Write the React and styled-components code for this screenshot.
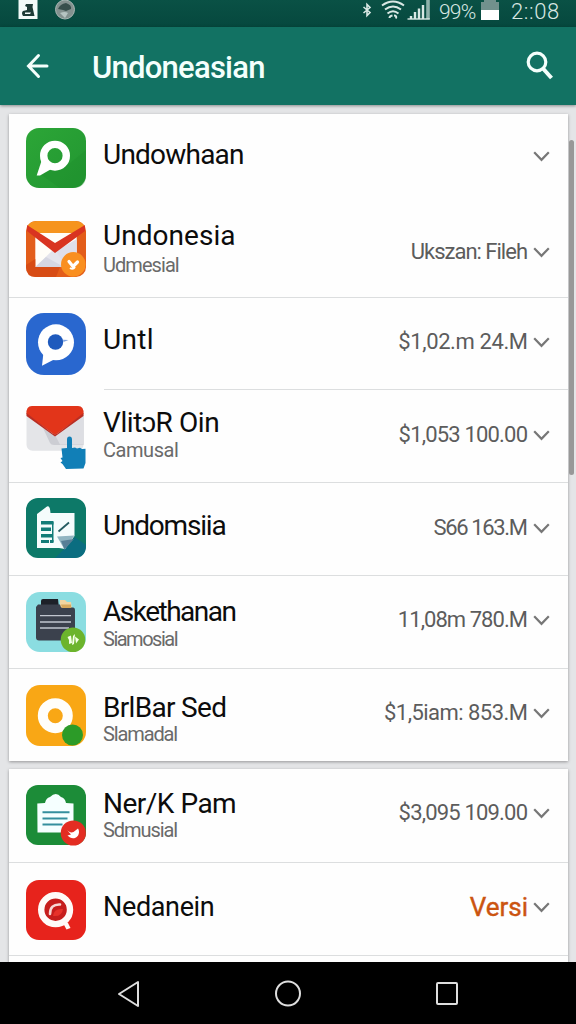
import React from 'react';
import styled, { createGlobalStyle } from 'styled-components';

const GlobalStyle = createGlobalStyle`
    * {
        box-sizing: border-box;
    }
    body {
        margin: 0;
        background: #e4e5e7;
        font-family: Roboto, "Liberation Sans", sans-serif;
    }
`;

const Screen = styled.div`
    position: relative;
    display: flex;
    flex-direction: column;
    width: 576px;
    height: 1024px;
    overflow: hidden;
`;

const StatusBar = styled.div`
    display: flex;
    flex: none;
    justify-content: space-between;
    height: 27px;
    padding: 0 15px 0 18px;
    background: linear-gradient(#0a5145, #06483e);
    color: #d9e8e4;
`;

const StatusGroup = styled.div`
    display: flex;
    align-items: flex-start;
`;

const StatusText = styled.span`
    width: ${props => props.$width}px;
    margin-left: ${props => props.$left}px;
    font-size: ${props => props.$size}px;
    line-height: 24px;
    letter-spacing: ${props => props.$spacing}px;
    font-weight: 300;
    white-space: nowrap;
`;

const AppBar = styled.header`
    display: flex;
    flex: none;
    align-items: center;
    height: 78px;
    padding: 0 22px 0 26px;
    background: #127263;
    color: #f4fffc;
    box-shadow: 0 1px 3px rgba(0, 0, 0, 0.4);
    z-index: 1;
`;

const AppTitle = styled.h1`
    flex: 1;
    margin: 4px 0 0 42px;
    font-size: 31px;
    line-height: 36px;
    font-weight: 500;
    letter-spacing: -0.75px;
`;

const Content = styled.main`
    flex: 1;
    min-height: 0;
    overflow: hidden;
    padding: 9px 8px 0 9px;
`;

const Card = styled.section`
    margin-bottom: 8px;
    background: #fefefe;
    box-shadow: 0 1px 3px rgba(0, 0, 0, 0.35);
`;

const Row = styled.div`
    display: flex;
    align-items: flex-start;
    height: ${props => props.$height}px;
    padding: 0 18px 0 17px;
`;

const Divider = styled.div`
    height: 1px;
    margin-top: -1px;
    margin-left: ${props => props.$inset || 0}px;
    background: #dcdedf;
`;

const IconBox = styled.div`
    flex: none;
    width: 60px;
    margin-top: ${props => props.$top}px;

    svg {
        display: block;
        overflow: visible;
    }
`;

const Names = styled.div`
    flex: 1;
    min-width: 0;
    margin-left: 17px;
    padding-top: ${props => props.$top}px;
    white-space: nowrap;
`;

const Name = styled.div`
    padding-top: 1px;
    font-size: ${props => props.$size || 28}px;
    line-height: 32px;
    letter-spacing: ${props => props.$spacing}px;
    color: #0c0c0c;
`;

const Detail = styled.div`
    margin-top: ${props => (props.$gap || 0) - 1}px;
    font-size: 20px;
    line-height: 24px;
    letter-spacing: ${props => props.$spacing}px;
    color: #6a6a6a;
`;

const Trailing = styled.div`
    display: flex;
    flex: none;
    align-items: center;
    gap: 5px;
    height: 26px;
    margin-top: ${props => props.$top}px;
    color: #777;
`;

const Amount = styled.span`
    font-size: ${props => (props.$accent ? 26 : 22)}px;
    line-height: 26px;
    letter-spacing: ${props => props.$spacing}px;
    margin-right: ${props => -props.$spacing}px;
    color: ${props => (props.$accent ? '#cb5410' : '#5c5c5c')};
    -webkit-text-stroke: ${props => (props.$accent ? '0.4px #cb5410' : '0')};
`;

const NavBar = styled.nav`
    display: flex;
    flex: none;
    justify-content: space-between;
    align-items: center;
    height: 62px;
    padding: 2px 117px 0;
    background: #000;
`;

const ScrollThumb = styled.div`
    position: absolute;
    top: 140px;
    right: 2px;
    width: 5px;
    height: 335px;
    border-radius: 3px;
    background: #989898;
`;

const Chevron = () => (
    <svg width="17" height="11" viewBox="0 0 17 11" fill="none" stroke="currentColor" strokeWidth="2.2">
        <path d="M1.2 1.2 8.5 8.8 15.8 1.2" />
    </svg>
);

const PhoneGreen = () => (
    <svg width="60" height="60">
        <defs>
            <linearGradient id="green" x1="0" y1="0" x2="1" y2="1">
                <stop offset="0" stopColor="#2ca637" />
                <stop offset="1" stopColor="#229631" />
            </linearGradient>
        </defs>
        <rect width="60" height="60" rx="13" fill="url(#green)" />
        <path d="M43 36 60 22v25q0 13-13 13H34L14 46Z" fill="#1c8b2c" opacity="0.35" />
        <path d="M15.500 33 10.700 47.500 14 47.500 27 40Z" fill="#fff" />
        <circle cx="29" cy="27.7" r="11.3" fill="none" stroke="#fff" strokeWidth="7.4" />
    </svg>
);

const MailOrange = () => (
    <svg width="60" height="56">
        <rect width="60" height="56" rx="10" fill="#e35d1a" />
        <path d="M1 7Q3 0 11 0h38q8 0 10 7L46 17H14Z" fill="#f6941d" />
        <path d="M9.3 12h41.4v34H9.3Z" fill="#fffdf8" />
        <path d="M9.3 46 28 28h4l18.7 18Z" fill="#e4e4ec" />
        <path d="M20 36 38 46H9.3Z" fill="#d5d6e2" />
        <path d="M50.7 18v28H40L30 30Z" fill="#dfdfea" />
        <path d="M1 4 29 22 59 4v6L29 32 1 10Z" fill="#d93421" />
        <path d="M0 44 9.3 38v8H34l-4 10H10Q0 56 0 46Z" fill="#d74c15" />
        <circle cx="47.3" cy="43.4" r="12.3" fill="#f98f20" />
        <path d="M43 40.500 47 45.500 51.500 41" fill="none" stroke="#fff" strokeWidth="3.200" strokeLinecap="round" strokeLinejoin="round" />
        <path d="M44 47q3 2 5-1" fill="none" stroke="#fff" strokeWidth="2" />
    </svg>
);

const ChatBlue = () => (
    <svg width="60" height="62">
        <rect width="60" height="62" rx="18" fill="#2967cf" />
        <path d="M17.500 39 16 52.800 31 45Z" fill="#fff" />
        <circle cx="30" cy="29.300" r="18" fill="#fff" />
        <circle cx="29.500" cy="29" r="7.700" fill="#1f5abd" />
        <path d="M37 26.800 42.500 27 37.500 29Z" fill="#7fa3df" />
    </svg>
);

const MailHand = () => (
    <svg width="60" height="63">
        <rect x="0.5" width="57" height="44.700" rx="6" fill="#e4e5e8" />
        <path d="M17 22 24 37q1 2 4 2h29.500V9L29 29Z" fill="#cccdd3" />
        <path d="M29 29 57.500 9v29.500H34Z" fill="#dddee3" />
        <path d="M.5 8Q0 0 6 0h46q6 0 5.500 8L32 27q-3 2.500-6 0Z" fill="#e2351a" />
        <path d="M.5 7 26 27q3 2.500 6 0L57.500 7v3L29 30.500.5 10Z" fill="#b92d22" />
        <path d="M41 33.500Q41 30.500 43.500 30.500T46 33.500V42L49 41.500 51 42.500 54 41.800 56 43 59.500 42.800V57L57.500 62.500 40 63 36.500 58 34.500 56.500 36.500 55 34.500 52 36.500 51.500 35.500 42.500 41 42Z" fill="#117fb7" />
    </svg>
);

const DocTeal = () => (
    <svg width="60" height="60">
        <rect width="60" height="60" rx="12" fill="#0d7968" />
        <path d="M38 51 48.500 39 60 47Q60 60 48 60H29Z" fill="#0b6d80" />
        <path d="M11 16 21 8.500q3-1.500 3.500 6.500H48.500V38L39 51 33 50H11Z" fill="#f5fcfc" />
        <g fill="#127c78">
            <path d="M15 23h12.500v3.500H15zM15 29.500h10v3.500H15zM15 36h12v3.500H15zM15 42h8v3h-8zM24 42h3.500v3H24z" />
            <path d="M26 24h1.500v20H26z" />
        </g>
        <path d="M32.500 33.500 43 24.500" stroke="#245c61" strokeWidth="1.800" />
        <path d="M31 38.500 48.500 37.500 38.500 51.500Z" fill="#91b5c1" />
        <path d="M35 43 48 41 38.500 51.500Z" fill="#587f96" />
    </svg>
);

const FolderCyan = () => (
    <svg width="60" height="60">
        <rect width="60" height="60" rx="14" fill="#8bdde1" />
        <path d="M15 16V9q0-2 2-2h15l1 9Z" fill="#1d2128" />
        <path d="M34 8h5l2 2h4l1 7H34Z" fill="#f1d5a1" />
        <path d="M12 12.500h22l1 3h12q2 0 2 3v27q0 3-3 3H13q-3 0-3-3V15Z" fill="#3b414d" />
        <path d="M35 12.500h10v3.500H36Z" fill="#d7a85c" />
        <path d="M14 23.700h31M14 30h31M14 36h29" stroke="#c1c6cf" strokeWidth="1.300" />
        <circle cx="47" cy="47.700" r="12.300" fill="#6cb42c" />
        <path d="M41.500 45 45 43.500 46 51 43 52 43 48ZM47 44l2-2-1 10-2 1ZM49 44.500l4 3-3 4Z" fill="#f5ffe8" />
    </svg>
);

const RingAmber = () => (
    <svg width="60" height="61">
        <rect width="60" height="61" rx="14" fill="#f9a715" />
        <circle cx="29.300" cy="30.700" r="12.500" fill="none" stroke="#fffefa" strokeWidth="10" />
        <circle cx="46.500" cy="50" r="10.500" fill="#2c9b28" />
    </svg>
);

const ClipGreen = () => (
    <svg width="60" height="60">
        <rect width="60" height="60" rx="12" fill="#1c8c38" />
        <path d="M11.300 18.500 19 18q1-5 5-6 6-6 11 0 4 1 5 6l7.500.5v29h-36Z" fill="#f5ffff" />
        <path d="M16.500 27.300h27M16.500 33.500h25M16.500 39.500h20" stroke="#348f9e" strokeWidth="2" />
        <circle cx="47.300" cy="48" r="12.600" fill="#e32d22" />
        <path d="M41 45c2 2 4 3 6.500 2L52 43.500c2 3 1 8-3 9.500-3 1-5.500-.5-7.500-2.500l3.500-1Z" fill="#fff" />
    </svg>
);

const SearchRed = () => (
    <svg width="60" height="60">
        <rect width="60" height="60" rx="13" fill="#e7231c" />
        <circle cx="29.600" cy="29.700" r="14.400" fill="#c61d1c" stroke="#fffaf8" strokeWidth="6.400" />
        <path d="M37 43h5l2.500 5-4 1.500Z" fill="#fffaf8" />
        <path d="M24 34q0-10 10-9.500" fill="none" stroke="#f7d8d5" strokeWidth="2.600" strokeLinecap="round" />
        <path d="M27 36q1-8 10-7-1 8-10 7Z" fill="#e7312a" />
    </svg>
);

const wallet = [
    { icon: PhoneGreen, height: 91, iconTop: 14, name: 'Undowhaan', nameTop: 24, nameSpacing: -0.78, valueTop: 29 },
    { icon: MailOrange, height: 93, iconTop: 16, name: 'Undonesia', nameTop: 14, nameSpacing: 0.05, detail: 'Udmesial', detailSpacing: -0.95, detailGap: 2, value: 'Ukszan: Fileh', valueTop: 34, valueSpacing: -1, divider: true },
    { icon: ChatBlue, height: 92, iconTop: 15, name: 'Untl', nameTop: 25, nameSpacing: 0.3, value: '$1,02.m 24.M', valueTop: 31, valueSpacing: -0.4, divider: true, inset: 95 },
    { icon: MailHand, height: 93, iconTop: 16, name: 'VlitɔR Oin', nameTop: 16, nameSpacing: -0.4, detail: 'Camusal', detailSpacing: -0.45, value: '$1,053 100.00', valueTop: 32, valueSpacing: -0.82, divider: true },
    { icon: DocTeal, height: 93, iconTop: 15, name: 'Undomsiia', nameTop: 26, nameSpacing: -1.2, value: 'S66 163.M', valueTop: 32, valueSpacing: -1.36, divider: true },
    { icon: FolderCyan, height: 93, iconTop: 16, name: 'Askethanan', nameTop: 19, nameSpacing: -1.5, detail: 'Siamosial', detailSpacing: -1.5, value: '11,08m 780.M', valueTop: 31, valueSpacing: -0.95, divider: true },
    { icon: RingAmber, height: 92, iconTop: 16, name: 'BrlBar Sed', nameTop: 22, nameSpacing: -0.68, detail: 'Slamadal', detailSpacing: -1.13, detailGap: -1, value: '$1,5iam: 853.M', valueTop: 31, valueSpacing: -0.53 },
];

const others = [
    { icon: ClipGreen, height: 94, iconTop: 16, name: 'Ner/K Pam', nameTop: 18, nameSpacing: -0.5, detail: 'Sdmusial', detailSpacing: -1.07, detailGap: -1, value: '$3,095 109.00', valueTop: 31, valueSpacing: -0.82, divider: true },
    { icon: SearchRed, height: 93, iconTop: 17, name: 'Nedanein', nameTop: 27, nameSize: 27, nameSpacing: -0.35, value: 'Versi', valueTop: 31, valueSpacing: 0, accent: true, divider: true },
    { height: 60 },
];

const AppRow = ({ item }) => {
    const Icon = item.icon;
    if (!Icon) return <Row $height={item.height} />;
    return (
        <>
            <Row $height={item.height}>
                <IconBox $top={item.iconTop}><Icon /></IconBox>
                <Names $top={item.nameTop}>
                    <Name $size={item.nameSize} $spacing={item.nameSpacing}>{item.name}</Name>
                    {item.detail && <Detail $gap={item.detailGap} $spacing={item.detailSpacing}>{item.detail}</Detail>}
                </Names>
                <Trailing $top={item.valueTop}>
                    {item.value && <Amount $accent={item.accent} $spacing={item.valueSpacing}>{item.value}</Amount>}
                    <Chevron />
                </Trailing>
            </Row>
            {item.divider && <Divider $inset={item.inset} />}
        </>
    );
};

const StatusIcons = () => (
    <svg width="70" height="27" fill="none" stroke="#d9e8e4">
        <path d="M1.500 7 8 12.500 5 15.500V4.500L8 7.500 1.500 13" strokeWidth="1.600" />
        <path d="M20 5.500q11-8 22 0M23 9.500q8-6 16 0M25.500 13.500q5.500-4.500 11 0" strokeWidth="2" />
        <path d="M27.500 18q0-2 3-2.500M32 15.500q3 0 2 3" strokeWidth="2" />
        <path d="M49 19v-3M53 19v-7M57 19V8.500M61 19V5" strokeWidth="2.400" />
        <path d="M66 19V0" stroke="#8fb2ab" strokeWidth="3.600" />
        <path d="M45.500 19h22.300" strokeWidth="1.400" />
    </svg>
);

const App = () => {
    return (
        <>
            <GlobalStyle />
            <Screen>
                <StatusBar>
                    <StatusGroup>
                        <svg width="60" height="27">
                            <rect x="0.500" width="19" height="19" fill="#f2fbf9" />
                            <path d="M8 4h7l-.5 3 2 9H5q-2-3 0-5l4-1V7L7 6Z" fill="#1d3c37" />
                            <path d="M7 12.500h6l-1 1.500H7z" fill="#f2fbf9" />
                            <circle cx="47" cy="9.500" r="9.500" fill="#83918f" stroke="#a9b7b4" />
                            <path d="M40 9q2-5 8-6 6 2 5 6l-5 2-3-1Z" fill="#374f4c" />
                            <path d="M42 13q5-2 8 0l-3 5Z" fill="#b6c4c2" />
                        </svg>
                    </StatusGroup>
                    <StatusGroup>
                        <StatusIcons />
                        <StatusText $size={21} $left={7} $width={42} $spacing={-0.8}>99%</StatusText>
                        <svg width="18" height="20">
                            <path d="M3 0h12v2h3v9H0V2h3Z" fill="#72918d" />
                            <path d="M0 10h18v10H0Z" fill="#fff" />
                        </svg>
                        <StatusText $size={22} $left={12} $width={50} $spacing={0.6}>2::08</StatusText>
                    </StatusGroup>
                </StatusBar>
                <AppBar>
                    <svg width="24" height="28" fill="none" stroke="currentColor" strokeWidth="3">
                        <path d="M12.500 3.500 2.500 14 12.500 24.500M3 14h18" strokeLinecap="round" />
                    </svg>
                    <AppTitle>Undoneasian</AppTitle>
                    <svg width="28" height="30" fill="none" stroke="currentColor">
                        <circle cx="11" cy="11" r="8.800" strokeWidth="3.200" />
                        <path d="M17 17.500 25.500 27" strokeWidth="4" />
                    </svg>
                </AppBar>
                <Content>
                    <Card>
                        {wallet.map(item => <AppRow key={item.name} item={item} />)}
                    </Card>
                    <Card>
                        {others.map((item, i) => <AppRow key={i} item={item} />)}
                    </Card>
                </Content>
                <NavBar>
                    <svg width="24" height="28" fill="none" stroke="#dedede" strokeWidth="2" strokeLinejoin="round">
                        <path d="M21 2v24L2 14Z" />
                    </svg>
                    <svg width="28" height="28" fill="none" stroke="#dedede" strokeWidth="2">
                        <circle cx="14" cy="13.500" r="12" />
                    </svg>
                    <svg width="24" height="26" fill="none" stroke="#dedede" strokeWidth="2">
                        <rect x="2" y="2" width="20" height="21" rx="1" />
                    </svg>
                </NavBar>
                <ScrollThumb />
            </Screen>
        </>
    );
};

export default App;
